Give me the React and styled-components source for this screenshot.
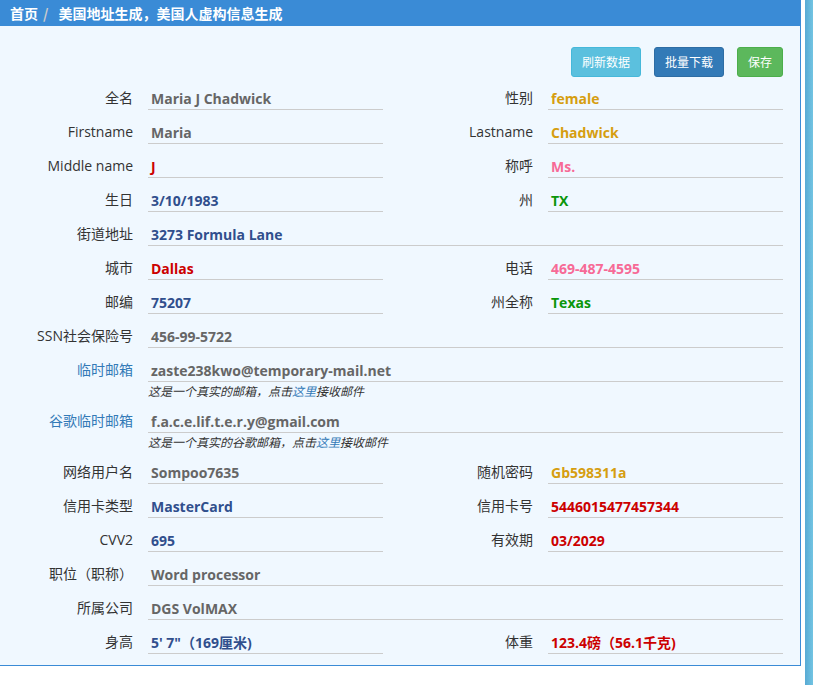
import React from 'react';
import styled, { createGlobalStyle } from 'styled-components';

const GlobalStyle = createGlobalStyle`
    html, body {
        margin: 0;
        padding: 0;
        background: #fff;
        overflow: hidden;
    }
    body {
        font-family: "Open Sans", "Noto Sans CJK SC", sans-serif;
    }
`;

const Page = styled.div`
    display: flex;
    height: 685px;
`;

const Panel = styled.div`
    width: 800px;
    align-self: flex-start;
    border: 1px solid #3a8bd6;
    border-left: none;
    border-top: none;
    background: #f0f8ff;
`;

const Strip = styled.div`
    width: 8px;
    margin-left: 4px;
    background: linear-gradient(to right, #58aad4, #72c4e2);
`;

const Heading = styled.div`
    height: 26px;
    line-height: 26px;
    padding-left: 10px;
    background: #3a8bd6;
    color: #fff;
    font-size: 14px;
    font-weight: bold;
    font-family: "Noto Sans CJK SC", sans-serif;
`;

const Sep = styled.span`
    color: #ccc;
    margin: 0 10px 0 5px;
`;

const Body = styled.div`
    padding: 21px 17px 6px 0;
`;

const Toolbar = styled.div`
    display: flex;
    justify-content: flex-end;
    gap: 13px;
    margin-bottom: 4px;
`;

const Button = styled.button`
    font-family: "Noto Sans CJK SC", sans-serif;
    font-size: 12px;
    line-height: 18px;
    padding: 5px 10px;
    color: #fff;
    border-radius: 3px;
    border: 1px solid ${(p) => p.edge};
    background: ${(p) => p.bg};
`;

const Row = styled.div`
    display: grid;
    grid-template-columns: 148px 235px 165px 235px;
    margin-bottom: 5px;
`;

const Label = styled.div`
    text-align: right;
    padding: 7px 15px 0 0;
    line-height: 20px;
    font-size: 14px;
    color: ${(p) => p.tone || '#333'};
`;

const Cell = styled.div`
    grid-column: ${(p) => (p.wide ? '2 / 5' : 'auto')};
`;

const Value = styled.div`
    box-sizing: border-box;
    height: 29px;
    padding: 8px 0 0 3px;
    line-height: 20px;
    border-bottom: 1px solid #ccc;
    font-size: 14px;
    font-weight: bold;
    color: ${(p) => p.tone};
    white-space: nowrap;
`;

const Hint = styled.div`
    font-size: 12px;
    line-height: 17px;
    font-style: italic;
    color: #333;
    font-family: "Noto Sans CJK SC", sans-serif;
`;

const Link = styled.span`
    color: #337ab7;
`;

const GRAY = '#666';
const GOLD = '#d69e10';
const RED = '#cc0000';
const PINK = '#f76a96';
const BLUE = '#304f8d';
const GREEN = '#0a960a';

const Pair = ({ left, right }) => (
    <Row>
        <Label>{left[0]}</Label>
        <Cell><Value tone={left[2]}>{left[1]}</Value></Cell>
        <Label>{right[0]}</Label>
        <Cell><Value tone={right[2]}>{right[1]}</Value></Cell>
    </Row>
);

const Wide = ({ label, value, tone, labelTone, hint }) => (
    <Row>
        <Label tone={labelTone}>{label}</Label>
        <Cell wide>
            <Value tone={tone}>{value}</Value>
            {hint && <Hint>这是一个真实的{hint}，点击<Link>这里</Link>接收邮件</Hint>}
        </Cell>
    </Row>
);

const App = () => {
    return (
        <Page>
            <GlobalStyle />
            <Panel>
                <Heading>首页<Sep>/</Sep>美国地址生成，美国人虚构信息生成</Heading>
                <Body>
                    <Toolbar>
                        <Button bg="#5bc0de" edge="#46b8da">刷新数据</Button>
                        <Button bg="#337ab7" edge="#2e6da4">批量下载</Button>
                        <Button bg="#5cb85c" edge="#4cae4c">保存</Button>
                    </Toolbar>
                    <Pair left={['全名', 'Maria J Chadwick', GRAY]} right={['性别', 'female', GOLD]} />
                    <Pair left={['Firstname', 'Maria', GRAY]} right={['Lastname', 'Chadwick', GOLD]} />
                    <Pair left={['Middle name', 'J', RED]} right={['称呼', 'Ms.', PINK]} />
                    <Pair left={['生日', '3/10/1983', BLUE]} right={['州', 'TX', GREEN]} />
                    <Wide label="街道地址" value="3273 Formula Lane" tone={BLUE} />
                    <Pair left={['城市', 'Dallas', RED]} right={['电话', '469-487-4595', PINK]} />
                    <Pair left={['邮编', '75207', BLUE]} right={['州全称', 'Texas', GREEN]} />
                    <Wide label="SSN社会保险号" value="456-99-5722" tone={GRAY} />
                    <Wide label="临时邮箱" labelTone="#337ab7" value="zaste238kwo@temporary-mail.net" tone={GRAY} hint="邮箱" />
                    <Wide label="谷歌临时邮箱" labelTone="#337ab7" value="f.a.c.e.lif.t.e.r.y@gmail.com" tone={GRAY} hint="谷歌邮箱" />
                    <Pair left={['网络用户名', 'Sompoo7635', GRAY]} right={['随机密码', 'Gb598311a', GOLD]} />
                    <Pair left={['信用卡类型', 'MasterCard', BLUE]} right={['信用卡号', '5446015477457344', RED]} />
                    <Pair left={['CVV2', '695', BLUE]} right={['有效期', '03/2029', RED]} />
                    <Wide label="职位（职称）" value="Word processor" tone={GRAY} />
                    <Wide label="所属公司" value="DGS VolMAX" tone={GRAY} />
                    <Pair left={['身高', '5\' 7"（169厘米)', BLUE]} right={['体重', '123.4磅（56.1千克)', RED]} />
                </Body>
            </Panel>
            <Strip />
        </Page>
    );
};

export default App;
